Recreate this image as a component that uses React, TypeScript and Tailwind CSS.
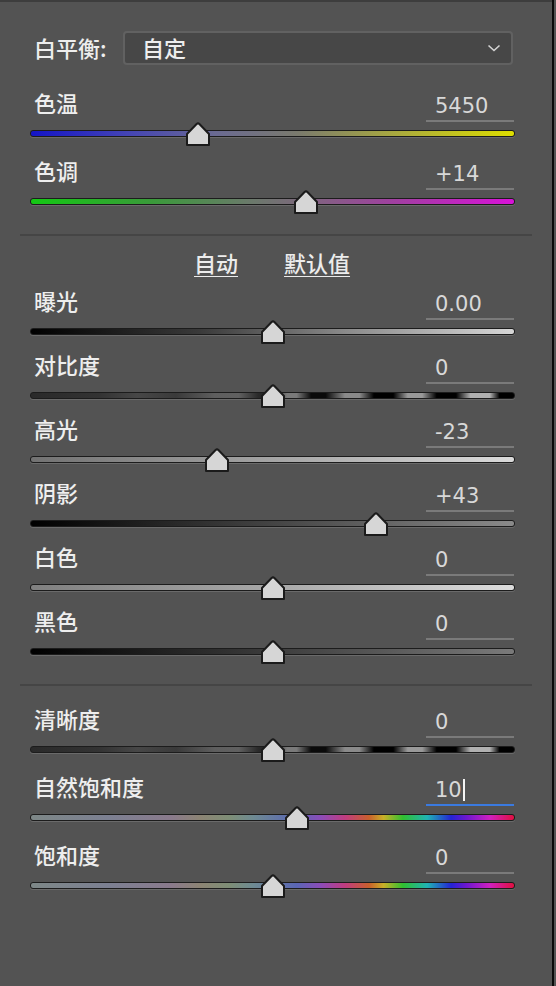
type Slider = {
  label: string;
  value: string;
  cx: number;
  track: string;
  active?: boolean;
};

const contrastTrack =
  "bg-[linear-gradient(to_right,#2a2a2a,#333333_14%,#474747_22%,#3a3a3a_30%,#5e5e5e_38%,#606060_43%,#2a2a2a_47%,#1a1a1a_50%,#7a7a7a_53%,#7a7a7a_55%,#0a0a0a_58%,#0a0a0a_61%,#8a8a8a_65%,#8a8a8a_68%,#000000_71%,#000000_75%,#999999_78%,#999999_81%,#000000_84%,#000000_88%,#b0b0b0_91%,#b0b0b0_95%,#000000_97%,#000000)]";

const spectrumTrack =
  "bg-[linear-gradient(to_right,#7d8787,#7c8092_16%,#8a7a8c_29%,#8c8474_35%,#7e8e76_41%,#6e8a92_46%,#5a66b4_55%,#8c4cb8_60%,#c03c80_65%,#c8602c_70%,#c8b028_73%,#30c030_77%,#20b4b4_82%,#2424d4_87%,#6a18d0_90%,#d020c0_95%,#e01040)]";

const whiteBalance: Slider[] = [
  {
    label: "色温",
    value: "5450",
    cx: 198,
    track:
      "bg-[linear-gradient(to_right,#1414c8,#4444b4_20%,#6a6a92_38%,#7a7a6e_55%,#a8a840_75%,#dede00)]",
  },
  {
    label: "色调",
    value: "+14",
    cx: 306,
    track:
      "bg-[linear-gradient(to_right,#14c814,#3a9a3a_25%,#6a7a6a_45%,#7a6a7a_55%,#a040a0_75%,#d812d8)]",
  },
];

const tone: Slider[] = [
  {
    label: "曝光",
    value: "0.00",
    cx: 272.5,
    track: "bg-[linear-gradient(to_right,#000000,#3a3a3a_35%,#8a8a8a_65%,#d6d6d6)]",
  },
  { label: "对比度", value: "0", cx: 272.5, track: contrastTrack },
  {
    label: "高光",
    value: "-23",
    cx: 216.5,
    track: "bg-[linear-gradient(to_right,#727272,#a4a4a4_50%,#dadada)]",
  },
  {
    label: "阴影",
    value: "+43",
    cx: 376,
    track: "bg-[linear-gradient(to_right,#000000,#444444_50%,#8a8a8a)]",
  },
  {
    label: "白色",
    value: "0",
    cx: 272.5,
    track: "bg-[linear-gradient(to_right,#808080,#a8a8a8_50%,#dcdcdc)]",
  },
  {
    label: "黑色",
    value: "0",
    cx: 272.5,
    track: "bg-[linear-gradient(to_right,#000000,#3c3c3c_50%,#7a7a7a)]",
  },
];

const presence: Slider[] = [
  { label: "清晰度", value: "0", cx: 272.5, track: contrastTrack },
  { label: "自然饱和度", value: "10", cx: 296.5, track: spectrumTrack, active: true },
  { label: "饱和度", value: "0", cx: 272.5, track: spectrumTrack },
];

const cjk = "font-['Noto_Sans_CJK_SC',sans-serif] font-medium";

function Thumb() {
  return (
    <svg width="24" height="24" viewBox="0 0 24 24">
      <path
        d="M1 12 L10.6 2 Q12 0.8 13.4 2 L23 12 L23 23 L1 23 Z"
        fill="#d6d6d6"
        stroke="#1b1b1b"
        strokeWidth="2"
        strokeLinejoin="round"
      />
    </svg>
  );
}

function SliderBlock({ s }: { s: Slider }) {
  return (
    <div className="relative ml-[30px] h-[58px] w-[485px]">
      <div className="flex h-[36px] items-center justify-between">
        <span className={`${cjk} pb-[4px] pl-[4px] text-[22px] leading-none text-[#eeeeee]`}>
          {s.label}
        </span>
        <div
          className={`mr-[1px] flex h-[36px] w-[88px] items-center border-b-2 pl-[9px] pt-[6px] font-['DejaVu_Sans',sans-serif] text-[21px] leading-none text-[#d8d8d8] ${
            s.active ? "border-[#3a7ae0]" : "border-[#7a7a7a]"
          }`}
        >
          {s.value}
          {s.active && <span className="ml-[1px] h-[22px] w-[2px] bg-[#f4f4f4]" />}
        </div>
      </div>
      <div className="relative h-[22px] pt-[8px]">
        <div
          className={`h-[7px] rounded-[3px] border border-[#1c1c1c] shadow-[0_1px_0_#6a6a6a] ${s.track}`}
        />
        <div className="absolute top-[0px]" style={{ left: `${s.cx - 42}px` }}>
          <Thumb />
        </div>
      </div>
    </div>
  );
}

export default function App() {
  return (
    <div className="flex h-[986px] w-[556px] overflow-hidden bg-[#535353]">
      <div className="flex w-[552px] flex-col border-t-2 border-[#3d3d3d]">
        <div className="mt-[29px] flex h-[34px] items-center pl-[34px]">
          <span className={`${cjk} w-[89px] pb-[3px] text-[22px] leading-none text-[#eeeeee]`}>
            白平衡:
          </span>
          <div className="flex h-[34px] w-[390px] items-center justify-between rounded-[4px] border-2 border-[#616161] bg-[#474747] pl-[17px] pr-[10px]">
            <span className={`${cjk} pb-[3px] text-[22px] leading-none text-[#eeeeee]`}>自定</span>
            <svg width="14" height="8" viewBox="0 0 14 8">
              <path d="M1.5 1.5 L7 6.5 L12.5 1.5" fill="none" stroke="#d4d4d4" strokeWidth="1.6" />
            </svg>
          </div>
        </div>

        <div className="mt-[21px] flex flex-col gap-[10px]">
          {whiteBalance.map((s) => (
            <SliderBlock key={s.label} s={s} />
          ))}
        </div>

        <div className="mx-[20px] mt-[22px] h-[2px] bg-[#454545]" />

        <div
          className={`${cjk} mt-[12px] flex h-[28px] items-center gap-[46px] pl-[194px] text-[22px] leading-none text-[#ececec]`}
        >
          <span className="underline decoration-1 underline-offset-[4px]">自动</span>
          <span className="underline decoration-1 underline-offset-[4px]">默认值</span>
        </div>

        <div className="mt-[8px] flex flex-col gap-[6px]">
          {tone.map((s) => (
            <SliderBlock key={s.label} s={s} />
          ))}
        </div>

        <div className="mx-[20px] mt-[22px] h-[2px] bg-[#454545]" />

        <div className="mt-[16px] flex flex-col gap-[10px]">
          {presence.map((s) => (
            <SliderBlock key={s.label} s={s} />
          ))}
        </div>
      </div>
      <div className="w-[2px] bg-[#0a0a0a]" />
      <div className="w-[2px]" />
    </div>
  );
}
